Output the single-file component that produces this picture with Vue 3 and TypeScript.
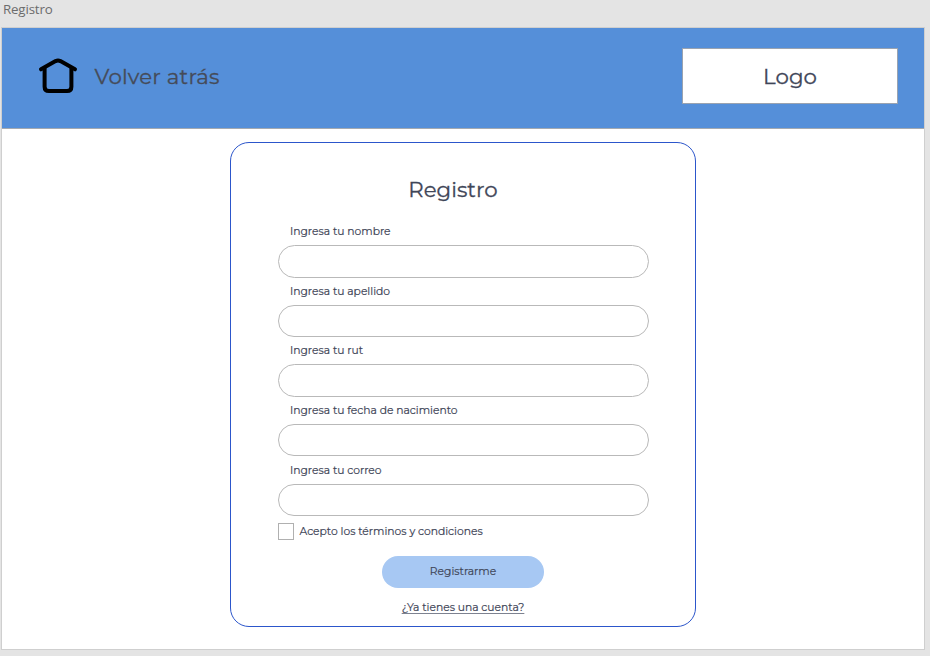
<script setup lang="ts">
import { ref } from 'vue'

interface Field {
  id: string
  label: string
  type: string
}

const fields: Field[] = [
  { id: 'nombre', label: 'Ingresa tu nombre', type: 'text' },
  { id: 'apellido', label: 'Ingresa tu apellido', type: 'text' },
  { id: 'rut', label: 'Ingresa tu rut', type: 'text' },
  { id: 'nacimiento', label: 'Ingresa tu fecha de nacimiento', type: 'text' },
  { id: 'correo', label: 'Ingresa tu correo', type: 'email' },
]

const values = ref<Record<string, string>>({})
const accepted = ref(false)
</script>

<template>
  <div class="canvas">
    <div class="frame-name">Registro</div>
    <div class="frame">
      <header class="bar">
        <a class="back">
          <svg class="home" viewBox="0 0 40 38" width="40" height="38" aria-hidden="true">
            <path d="M3 12.3 L17.6 4.1 Q20 2.9 22.4 4.1 L37 12.3" />
            <path d="M6.6 11.3 V29.8 Q6.6 34.1 10.9 34.1 H29.1 Q33.4 34.1 33.4 29.8 V11.3" />
          </svg>
          <span class="back-text">Volver atrás</span>
        </a>
        <div class="logo"><span>Logo</span></div>
      </header>
      <main class="content">
        <form class="card" @submit.prevent>
          <h1 class="title">Registro</h1>
          <div v-for="field in fields" :key="field.id" class="field">
            <label :for="field.id"><span>{{ field.label }}</span></label>
            <input :id="field.id" v-model="values[field.id]" :type="field.type" />
          </div>
          <label class="terms">
            <input v-model="accepted" type="checkbox" />
            <span>Acepto los términos y condiciones</span>
          </label>
          <button class="submit" type="submit"><span>Registrarme</span></button>
          <a class="login">¿Ya tienes una cuenta?</a>
        </form>
      </main>
    </div>
  </div>
</template>

<style>
body {
  background: #e4e4e4;
}
</style>

<style scoped>
.canvas {
  box-sizing: border-box;
  width: 930px;
  height: 656px;
  overflow: hidden;
  background: #e4e4e4;
  color: #3f4658;
  font-family: Montserrat, Inter, sans-serif;
  font-weight: 400;
}
.frame-name {
  height: 27px;
  padding-left: 3px;
  color: #6c6c6c;
  font: 13.3px/19px "Open Sans", "Noto Sans", sans-serif;
  letter-spacing: -0.15px;
  box-sizing: border-box;
}
.frame {
  box-sizing: border-box;
  width: 924px;
  height: 623px;
  margin-left: 1px;
  border: 1px solid #cfcfcf;
  background: #fff;
  -webkit-text-stroke: 0.2px currentColor;
}
.bar {
  box-sizing: border-box;
  display: flex;
  align-items: center;
  justify-content: space-between;
  height: 101px;
  padding: 0 26px 0 36px;
  border-bottom: 1px solid #a3a9b1;
  background: #558fd9;
}
.back {
  display: flex;
  align-items: center;
  margin-top: -4px;
  color: #454b58;
}
.home {
  margin: 0 16.5px 0 0;
  fill: none;
  stroke: #000;
  stroke-width: 4;
  stroke-linecap: round;
  stroke-linejoin: round;
}
.back-text,
.logo,
.title {
  font-size: 21.33px;
  line-height: 26px;
  font-weight: 400;
  -webkit-text-stroke: 0.3px currentColor;
}
.back-text {
  letter-spacing: 0.18px;
}
.logo {
  box-sizing: border-box;
  display: flex;
  align-items: center;
  justify-content: center;
  width: 216px;
  height: 56px;
  margin-top: -4px;
  border: 1px solid #9aa3b0;
  background: #fff;
}
.content {
  display: flex;
  justify-content: center;
  padding-top: 13px;
}
.card {
  box-sizing: border-box;
  display: flex;
  flex-direction: column;
  width: 466px;
  height: 485px;
  padding: 33px 47px 0;
  border: 1px solid #2c56cb;
  border-radius: 19px;
  font-size: 10.74px;
}
.title {
  align-self: center;
  margin: 0 20px 22px 0;
}
.field {
  display: flex;
  flex-direction: column;
  height: 59.6px;
}
.field label {
  box-sizing: border-box;
  height: 21.2px;
  padding: 1.2px 0 0 12px;
  line-height: 14px;
}
.field input {
  box-sizing: border-box;
  width: 371px;
  height: 32.4px;
  margin: 0;
  padding: 0 16px;
  border: 1px solid #b9b9b9;
  border-radius: 17px;
  outline: none;
  background: #fff;
  color: inherit;
  font: inherit;
}
.terms {
  display: flex;
  align-items: center;
  gap: 5.5px;
  height: 17px;
  margin-top: 1px;
}
.terms input {
  box-sizing: border-box;
  appearance: none;
  width: 16px;
  height: 17px;
  margin: 0;
  border: 1px solid #b0b0b0;
  background: #fff;
}
.submit {
  align-self: center;
  width: 162px;
  height: 32px;
  margin-top: 16px;
  padding: 0 0 1px;
  border: 0;
  border-radius: 16px;
  background: #a7c8f3;
  color: #3f4658;
  font: inherit;
}
.login {
  align-self: center;
  margin-top: 12px;
  line-height: 15px;
  text-decoration: underline;
  text-decoration-color: #7d8290;
  text-decoration-thickness: 1px;
  text-underline-offset: 1.5px;
}
</style>
